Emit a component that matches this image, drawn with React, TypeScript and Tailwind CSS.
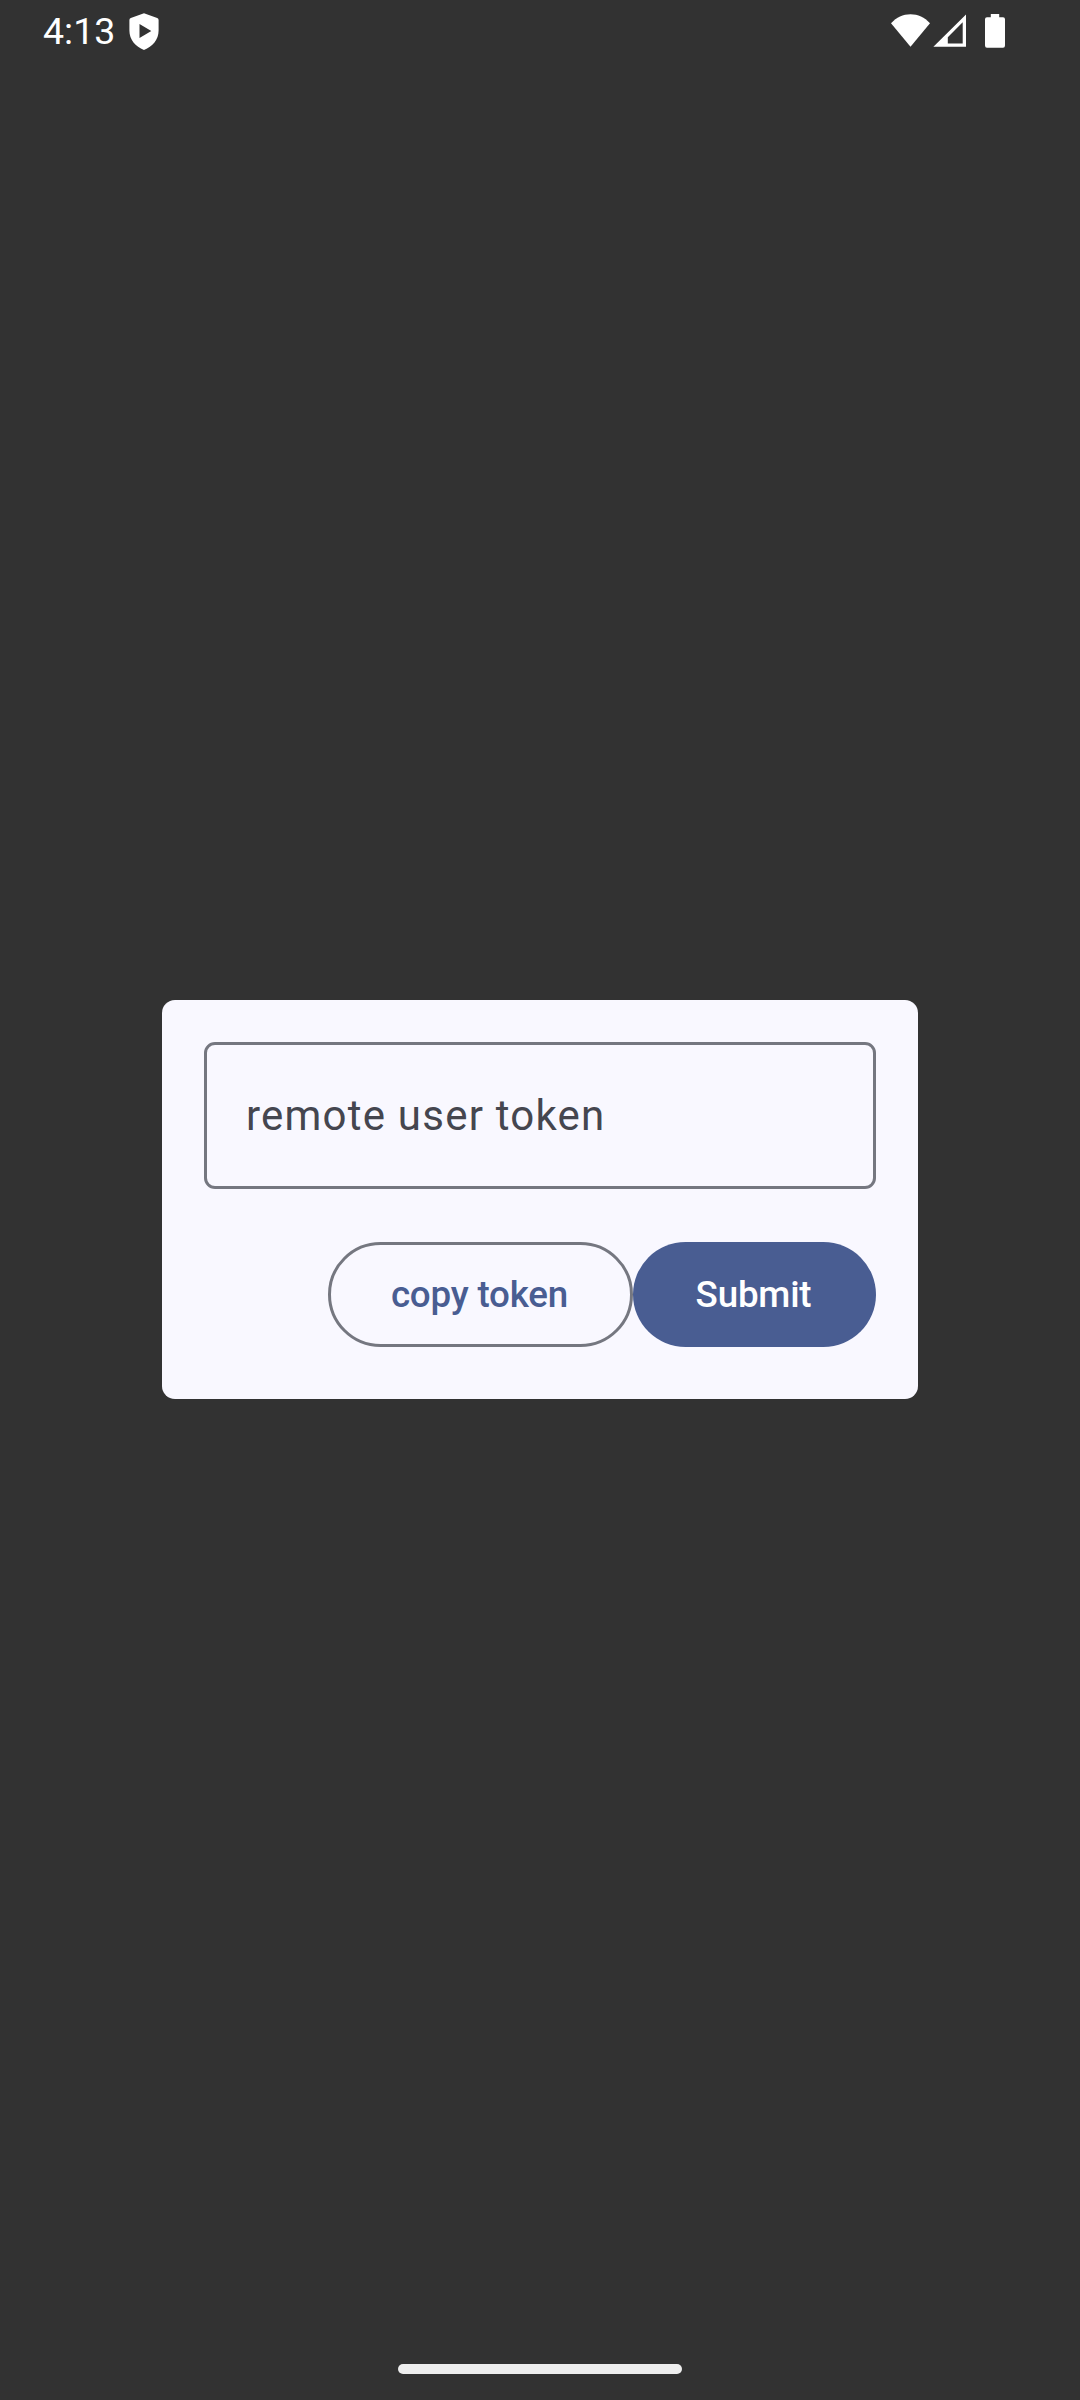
const ShieldPlay = () => (
  <svg className="ml-[16px] mt-[13px] h-[37px] w-[30px]" viewBox="0 0 30 37" fill="#fff">
    <path
      fillRule="evenodd"
      d="M15 0.3L28.2 4.9Q29.6 5.5 29.6 7V17.5C29.6 26.5 23.5 33.8 15 36.9C6.5 33.8 0.4 26.5 0.4 17.5V7Q0.4 5.5 1.8 4.9ZM10.5 11V25L22.3 18Z"
    />
  </svg>
);

const Wifi = () => (
  <svg className="h-[33px] w-[40px]" viewBox="0 0 40 33" fill="#fff">
    <path d="M0 9.2C5.5 3.3 12 0.2 19.5 0.2S33.5 3.3 39 9.2L19.5 32.8Z" />
  </svg>
);

const Signal = () => (
  <svg className="ml-[2px] h-[33px] w-[33px]" viewBox="0 0 33 33" fill="#fff">
    <path fillRule="evenodd" d="M33 0.4V32.8H0.4ZM29.7 8.3L14.8 23.3V29.5H29.7Z" />
  </svg>
);

const Battery = () => (
  <svg className="ml-[19px] h-[34px] w-[20px]" viewBox="0 0 20 34" fill="#fff">
    <path d="M5.8 0H14.2V3.3H18Q20 3.3 20 5.3V31.6Q20 33.8 18 33.8H2Q0 33.8 0 31.6V5.3Q0 3.3 2 3.3H5.8Z" />
  </svg>
);

export default function App() {
  return (
    <div className="flex h-[2400px] w-[1080px] flex-col bg-[#323232] font-[Roboto,sans-serif]">
      <header className="flex h-[63px] items-start justify-between pl-[43px] pr-[75px]">
        <div className="flex items-start">
          <span className="mt-[9px] w-[70px] whitespace-nowrap text-[37.5px] leading-[45px] text-white">4:13</span>
          <ShieldPlay />
        </div>
        <div className="mt-[14px] flex items-start">
          <Wifi />
          <Signal />
          <Battery />
        </div>
      </header>

      <main className="flex grow flex-col items-center pt-[937px]">
        <form className="flex h-[399px] w-[756px] flex-col rounded-[13px] bg-[#f9f8ff] p-[42px]" onSubmit={(e) => e.preventDefault()}>
          <input
            type="text"
            placeholder="remote user token"
            className="h-[147px] w-full rounded-[11px] border-3 border-[#757780] bg-transparent px-[39px] text-[42px] tracking-[1.22px] text-[#45464f] outline-none placeholder:text-[#45464f] placeholder:opacity-100"
          />
          <div className="mt-[53px] flex justify-end">
            <button type="button" className="h-[105px] w-[305px] whitespace-nowrap rounded-full border-3 border-[#757780] pr-[2px] text-[36.75px] font-medium tracking-[-0.2px] text-[#495d92]">
              copy token
            </button>
            <button type="submit" className="h-[105px] w-[243px] whitespace-nowrap rounded-full bg-[#495d92] pr-[2px] text-[36.75px] font-medium tracking-[-0.2px] text-white">
              Submit
            </button>
          </div>
        </form>
      </main>

      <footer className="flex h-[63px] justify-center pt-[27px]">
        <div className="h-[10px] w-[284px] rounded-full bg-[#eeeeee]" />
      </footer>
    </div>
  );
}
